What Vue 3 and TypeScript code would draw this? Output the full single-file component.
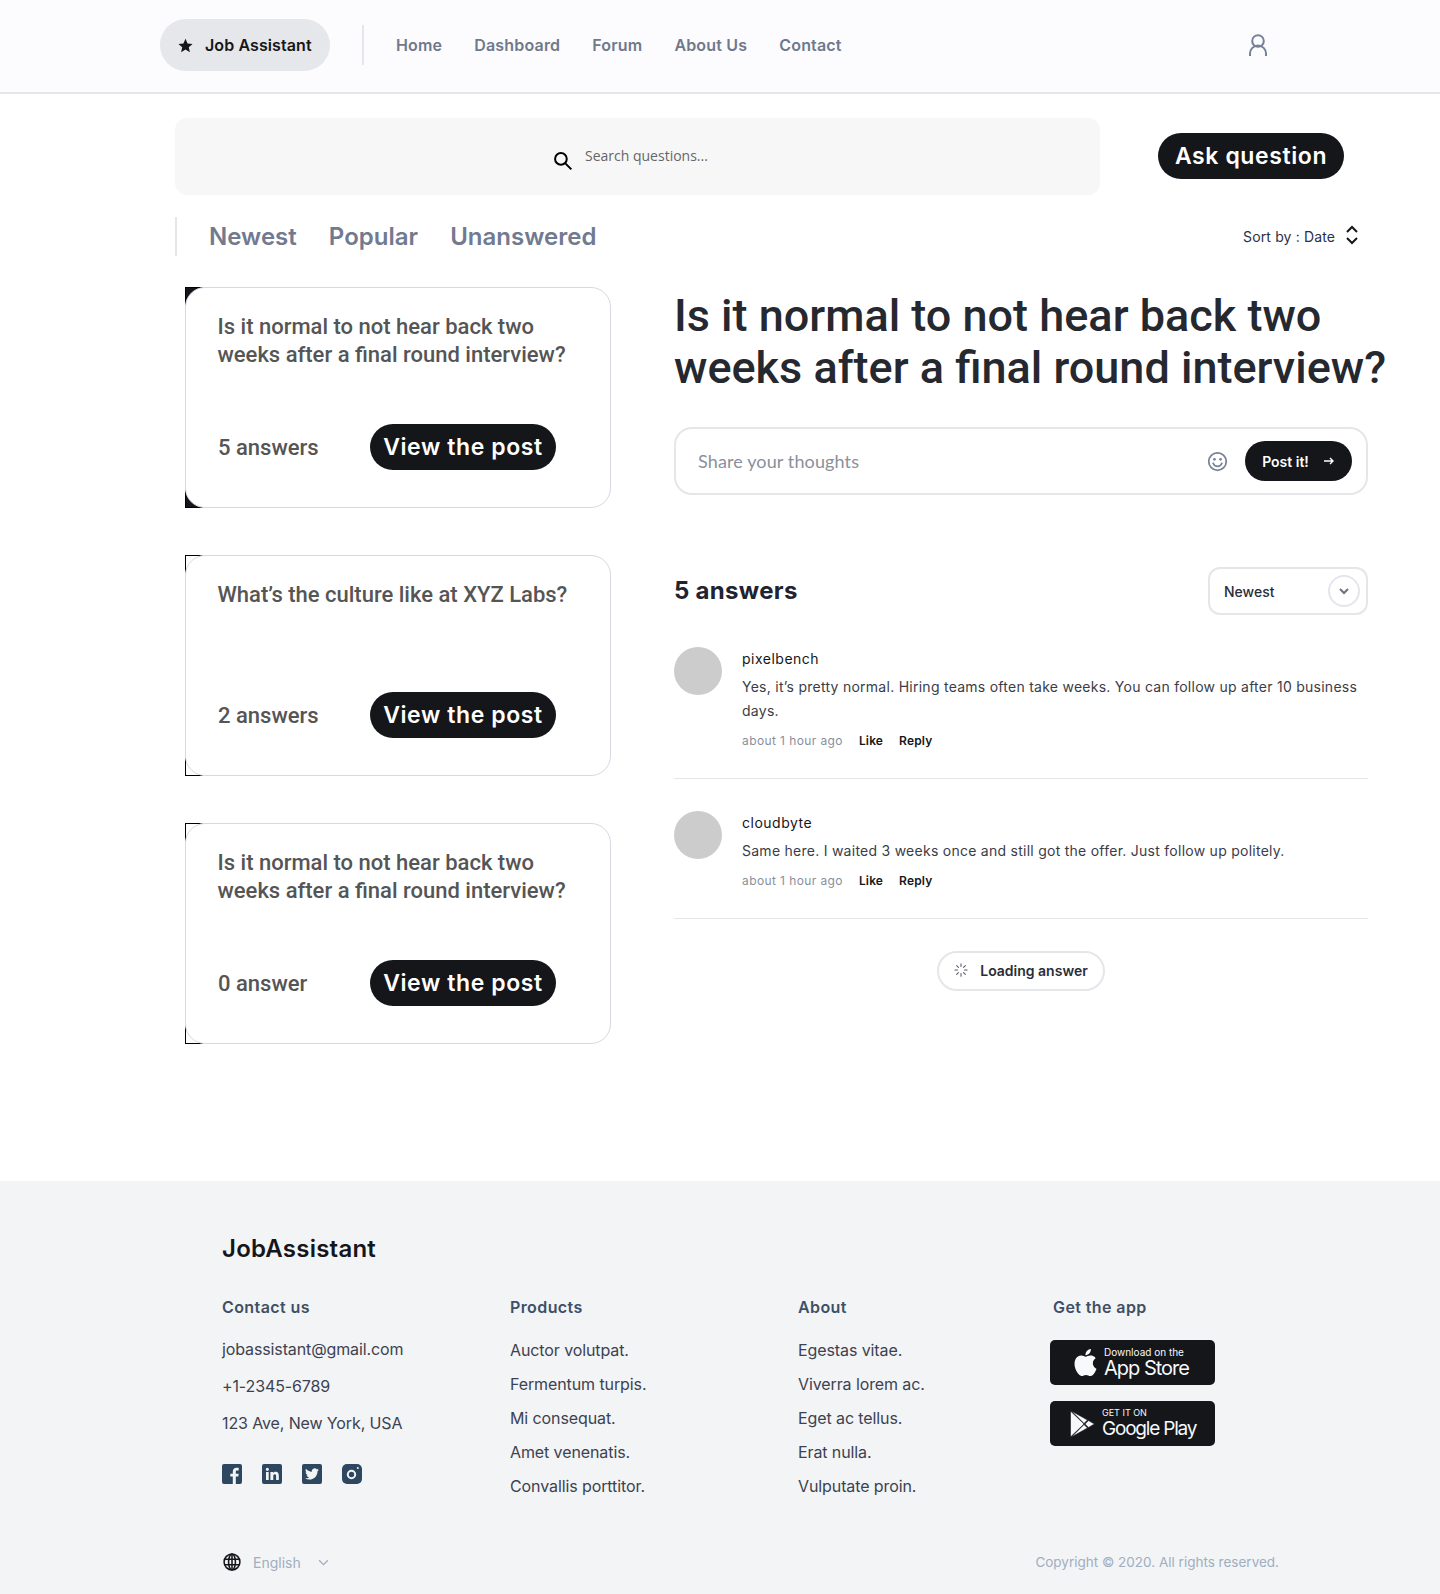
<template>
  <div class="page">
    <header class="top_bar">
      <div class="logo_pill">
        <svg class="star" viewBox="0 0 24 24"><path d="M12 2.500l2.900 6.600 7.100.7-5.400 4.700 1.600 7-6.200-3.700-6.200 3.700 1.600-7L2 9.800l7.100-.7z" /></svg>
        <span>Job Assistant</span>
      </div>
      <nav class="nav">
        <a v-for="item in navItems" :key="item">{{ item }}</a>
      </nav>
      <svg class="user_icon" viewBox="0 0 18 22" fill="none" stroke="#768096" stroke-width="2">
        <circle cx="9" cy="7" r="5.800" />
        <path d="M1 22v-2.500a8 8 0 0 1 16 0V22" />
      </svg>
    </header>

    <main class="main">
      <div class="search_row">
        <div class="search_box">
          <svg class="search_icon" viewBox="0 0 24 24" fill="none" stroke="#000" stroke-width="2.400">
            <circle cx="9.500" cy="9.500" r="7" />
            <path d="M14.500 14.500l7.500 7.500" />
          </svg>
          <span class="search_text">Search questions...</span>
        </div>
        <button class="btn_big ask">Ask question</button>
      </div>

      <div class="tabs_row">
        <div class="tabs">
          <span v-for="tab in tabs" :key="tab">{{ tab }}</span>
        </div>
        <div class="sort">
          <span>Sort by : Date</span>
          <svg viewBox="0 0 14 20" fill="none" stroke="#15161a" stroke-width="2">
            <path d="M2 7l5-5 5 5M2 13l5 5 5-5" />
          </svg>
        </div>
      </div>

      <div class="columns">
        <div class="question_list">
          <div
            v-for="(q, i) in questions"
            :key="i"
            class="question_card"
            :class="{ active: i === 0 }"
          >
            <p class="question_title">{{ q.title }}</p>
            <div class="question_foot">
              <span class="question_count">{{ q.count }}</span>
              <button class="btn_big">View the post</button>
            </div>
          </div>
        </div>

        <section class="detail">
          <h1>Is it normal to not hear back two weeks after a final round interview?</h1>
          <div class="thought_box">
            <span class="thought_text">Share your thoughts</span>
            <svg class="smile" viewBox="0 0 24 24" fill="none" stroke="#768096" stroke-width="2">
              <circle cx="12" cy="12" r="10" />
              <circle cx="8.500" cy="9.500" r="1.500" fill="#768096" stroke="none" />
              <circle cx="15.500" cy="9.500" r="1.500" fill="#768096" stroke="none" />
              <path d="M7 14c1 2.400 2.900 3.500 5 3.500s4-1.100 5-3.500" stroke-linecap="round" />
            </svg>
            <button class="post_btn">
              <span>Post it!</span>
              <svg viewBox="0 0 12 10" fill="none" stroke="#fff" stroke-width="1.400"><path d="M1 5h9M7 2l3 3-3 3" /></svg>
            </button>
          </div>

          <div class="answers_head">
            <h2>5 answers</h2>
            <div class="select_box">
              <span>Newest</span>
              <span class="select_circle">
                <svg viewBox="0 0 12 8" fill="none" stroke="#6b7280" stroke-width="2"><path d="M2 2l4 4 4-4" /></svg>
              </span>
            </div>
          </div>

          <div v-for="a in answers" :key="a.name" class="answer">
            <div class="avatar"></div>
            <div class="answer_body">
              <div class="answer_name">{{ a.name }}</div>
              <p class="answer_text">{{ a.text }}</p>
              <div class="answer_meta">
                <span class="answer_time">about 1 hour ago</span>
                <b>Like</b>
                <b>Reply</b>
              </div>
            </div>
          </div>

          <div class="loading_wrap">
            <div class="loading_pill">
              <svg viewBox="0 0 16 16" stroke="#555b68" stroke-width="1.200" stroke-linecap="round">
                <path d="M8 1v3M8 12v3M1 8h3M12 8h3M3 3l2.100 2.100M10.900 10.900L13 13M3 13l2.100-2.100M10.900 5.100L13 3" />
              </svg>
              <span>Loading answer</span>
            </div>
          </div>
        </section>
      </div>
    </main>

    <footer class="footer">
      <div class="brand">JobAssistant</div>
      <div class="footer_cols">
        <div class="col col_contact">
          <h4>Contact us</h4>
          <div class="contact_line" v-for="c in contacts" :key="c">{{ c }}</div>
          <div class="socials">
            <svg viewBox="0 0 20 20"><rect width="20" height="20" rx="2" fill="#2e4760" /><path fill="#f3f4f6" d="M13.800 20v-7.400h2.500l.4-2.900h-2.900V7.900c0-.8.200-1.400 1.400-1.400h1.500V3.900c-.3 0-1.200-.1-2.200-.1-2.200 0-3.700 1.300-3.700 3.800v2.100H8.300v2.900h2.500V20z" /></svg>
            <svg viewBox="0 0 20 20"><rect width="20" height="20" rx="2" fill="#2e4760" /><path fill="#f3f4f6" d="M4 8h2.700v8H4zM5.350 3.800a1.550 1.550 0 1 1 0 3.100 1.550 1.550 0 0 1 0-3.100zM8.400 8h2.600v1.100c.4-.7 1.300-1.300 2.600-1.300 2.700 0 3.200 1.700 3.200 4V16h-2.700v-3.700c0-.9 0-2.100-1.300-2.100s-1.500 1-1.500 2V16H8.400z" /></svg>
            <svg viewBox="0 0 20 20"><rect width="20" height="20" rx="2" fill="#2e4760" /><path fill="#f3f4f6" transform="translate(3 3) scale(.58)" d="M23.953 4.570a10 10 0 01-2.825.775 4.958 4.958 0 002.163-2.723c-.951.555-2.005.959-3.127 1.184a4.920 4.920 0 00-8.384 4.482C7.690 8.095 4.067 6.130 1.640 3.162a4.822 4.822 0 00-.666 2.475c0 1.710.870 3.213 2.188 4.096a4.904 4.904 0 01-2.228-.616v.060a4.923 4.923 0 003.946 4.827 4.996 4.996 0 01-2.212.085 4.936 4.936 0 004.604 3.417 9.867 9.867 0 01-6.102 2.105c-.390 0-.779-.023-1.170-.067a13.995 13.995 0 007.557 2.209c9.053 0 13.998-7.496 13.998-13.985 0-.210 0-.420-.015-.630A9.935 9.935 0 0024 4.590z" /></svg>
            <svg viewBox="0 0 20 20"><rect width="20" height="20" rx="5" fill="#2e4760" /><circle cx="9.500" cy="10.500" r="3.700" fill="none" stroke="#f3f4f6" stroke-width="2" /><circle cx="15.800" cy="4" r="1" fill="#f3f4f6" /></svg>
          </div>
        </div>
        <div class="col col_links" v-for="col in linkCols" :key="col.title">
          <h4>{{ col.title }}</h4>
          <div class="link_line" v-for="l in col.links" :key="l">{{ l }}</div>
        </div>
        <div class="col col_app">
          <h4>Get the app</h4>
          <div class="store_badge">
            <svg class="apple" viewBox="0 0 24 24" fill="#f7f9fb"><path d="M12.152 6.896c-.948 0-2.415-1.078-3.960-1.040-2.040.027-3.910 1.183-4.961 3.014-2.117 3.675-.546 9.103 1.519 12.090 1.013 1.454 2.208 3.090 3.792 3.039 1.520-.065 2.090-.987 3.935-.987 1.831 0 2.350.987 3.960.948 1.637-.026 2.676-1.480 3.676-2.948 1.156-1.688 1.636-3.325 1.662-3.415-.039-.013-3.182-1.221-3.220-4.857-.026-3.040 2.480-4.494 2.597-4.559-1.429-2.090-3.623-2.324-4.390-2.376-2-.156-3.675 1.090-4.610 1.090zM15.530 3.830c.843-1.012 1.400-2.427 1.245-3.830-1.207.052-2.662.805-3.532 1.818-.780.896-1.454 2.338-1.273 3.714 1.338.104 2.715-.688 3.559-1.701" /></svg>
            <div class="store_text">
              <small>Download on the</small>
              <strong>App Store</strong>
            </div>
          </div>
          <div class="store_badge play">
            <svg class="play_icon" viewBox="0 0 24 26" fill="#f7f9fb" stroke="#15161a" stroke-width=".6">
              <path d="M0 0l13.500 13L0 26z" />
              <path d="M1 0l16 9-3.500 3.500z" />
              <path d="M1 26l16-9-3.500-3.500z" />
              <path d="M18 9.600L24 13l-6 3.400-3.500-3.400z" />
            </svg>
            <div class="store_text">
              <small>GET IT ON</small>
              <strong>Google Play</strong>
            </div>
          </div>
        </div>
      </div>
      <div class="footer_bottom">
        <div class="lang">
          <svg class="globe" viewBox="0 0 20 20" fill="none" stroke="#15161a" stroke-width="1.700">
            <circle cx="10" cy="10" r="8.800" />
            <ellipse cx="10" cy="10" rx="3.800" ry="8.800" />
            <path d="M2 7h16M2 13h16M10 1v18" />
          </svg>
          <span>English</span>
          <svg class="lang_chev" viewBox="0 0 12 8" fill="none" stroke="#a0aec0" stroke-width="1.500"><path d="M1 1.500l5 5 5-5" /></svg>
        </div>
        <div class="copyright">Copyright © 2020. All rights reserved.</div>
      </div>
    </footer>
  </div>
</template>

<script setup lang="ts">
interface Question {
  title: string;
  count: string;
}
interface Answer {
  name: string;
  text: string;
}

const navItems = ['Home', 'Dashboard', 'Forum', 'About Us', 'Contact'];
const tabs = ['Newest', 'Popular', 'Unanswered'];

const questions: Question[] = [
  { title: 'Is it normal to not hear back two weeks after a final round interview?', count: '5 answers' },
  { title: 'What’s the culture like at XYZ Labs?', count: '2 answers' },
  { title: 'Is it normal to not hear back two weeks after a final round interview?', count: '0 answer' },
];

const answers: Answer[] = [
  { name: 'pixelbench', text: 'Yes, it’s pretty normal. Hiring teams often take weeks. You can follow up after 10 business days.' },
  { name: 'cloudbyte', text: 'Same here. I waited 3 weeks once and still got the offer. Just follow up politely.' },
];

const contacts = ['jobassistant@gmail.com', '+1-2345-6789', '123 Ave, New York, USA'];

const linkCols = [
  { title: 'Products', links: ['Auctor volutpat.', 'Fermentum turpis.', 'Mi consequat.', 'Amet venenatis.', 'Convallis porttitor.'] },
  { title: 'About', links: ['Egestas vitae.', 'Viverra lorem ac.', 'Eget ac tellus.', 'Erat nulla.', 'Vulputate proin.'] },
];
</script>

<style>
body {
  background: #fff;
}
</style>

<style scoped>
.page {
  width: 1440px;
  height: 1594px;
  display: flex;
  flex-direction: column;
  font-family: Inter, "Liberation Sans", sans-serif;
  color: #15161a;
}

.top_bar {
  height: 94px;
  box-sizing: border-box;
  display: flex;
  align-items: center;
  padding: 0 173px 2px 160px;
  background: #fcfcfe;
  border-bottom: 2px solid #e5e6ea;
}

.logo_pill {
  width: 170px;
  height: 52px;
  box-sizing: border-box;
  display: flex;
  align-items: center;
  gap: 11px;
  padding-left: 17px;
  background: #e6e7ea;
  border-radius: 26px;
  font-size: 16px;
  font-weight: 600;
  letter-spacing: 0.1px;
}

.star {
  width: 17px;
  height: 17px;
  fill: #15161a;
}

.nav {
  height: 40px;
  display: flex;
  align-items: center;
  gap: 32px;
  margin-left: 32px;
  padding-left: 32px;
  border-left: 2px solid #e5e6ea;
  font-size: 16px;
  font-weight: 600;
  letter-spacing: 0.18px;
  color: #6f788c;
}

.user_icon {
  width: 18px;
  height: 22px;
  margin-left: auto;
}

.main {
  flex: 1;
  padding: 24px 0 0 175px;
}

.search_row {
  display: flex;
  align-items: center;
}

.search_box {
  width: 925px;
  height: 77px;
  display: flex;
  align-items: center;
  padding-left: 378px;
  box-sizing: border-box;
  background: #f7f7f7;
  border-radius: 12px;
}

.search_icon {
  width: 20px;
  height: 20px;
  margin: 9px 12px 0 0;
}

.search_text {
  margin-top: -2px;
  font-family: "Open Sans", sans-serif;
  font-size: 14px;
  color: #666;
}

.btn_big {
  width: 186px;
  height: 46px;
  padding: 0;
  background: #15161a;
  color: #fff;
  border: 0;
  border-radius: 23px;
  font-family: Inter, sans-serif;
  font-size: 23px;
  font-weight: 600;
  letter-spacing: 0.6px;
  white-space: nowrap;
}

.ask {
  margin: -2px 0 0 58px;
}

.tabs_row {
  display: flex;
  align-items: center;
  height: 39px;
  margin-top: 22px;
}

.tabs {
  width: 1068px;
  height: 39px;
  box-sizing: border-box;
  display: flex;
  align-items: center;
  gap: 32px;
  padding-left: 32px;
  border-left: 2px solid #e5e6ea;
  font-size: 24px;
  font-weight: 600;
  letter-spacing: 0.02px;
  color: #717a8f;
}

.sort {
  display: flex;
  align-items: center;
  gap: 10px;
  font-size: 14px;
  letter-spacing: 0.15px;
  color: #2a3147;
}

.sort svg {
  width: 14px;
  height: 20px;
  margin-top: -3px;
}

.columns {
  display: flex;
  align-items: flex-start;
  margin-top: 31px;
  padding-left: 10px;
}

.question_list {
  display: flex;
  flex-direction: column;
  gap: 47px;
  width: 426px;
}

.question_card {
  position: relative;
  height: 221px;
  box-sizing: border-box;
  display: flex;
  flex-direction: column;
  justify-content: space-between;
  padding: 25px 32px 37px;
  background: #fff;
  border: 1px solid #d8d9e0;
  border-radius: 20px;
}

/* corner marks that show behind the rounded card */
.question_card::before,
.question_card::after {
  content: "";
  position: absolute;
  left: -1px;
  width: 18px;
  height: 18px;
  z-index: -1;
  box-sizing: border-box;
  border-left: 1px solid #000;
}

.question_card::before {
  top: -1px;
  border-top: 1px solid #000;
}

.question_card::after {
  bottom: -1px;
  border-bottom: 1px solid #000;
}

.question_card.active::before,
.question_card.active::after {
  background: #15161a;
}

.question_title {
  margin: 0 0 0 -0.5px;
  font-family: Roboto, sans-serif;
  font-size: 22px;
  font-weight: 500;
  line-height: 28px;
  color: #555;
}

.question_foot {
  display: flex;
  align-items: center;
}

.question_count {
  width: 152px;
  font-family: Roboto, sans-serif;
  font-size: 22px;
  font-weight: 500;
  color: #555;
}

.detail {
  width: 694px;
  margin-left: 63px;
}

.detail h1 {
  width: 740px;
  margin: 3px 0 0;
  font-family: Roboto, sans-serif;
  font-size: 45px;
  font-weight: 500;
  line-height: 52px;
  color: #26282f;
}

.thought_box {
  height: 68px;
  box-sizing: border-box;
  display: flex;
  align-items: center;
  margin-top: 33px;
  padding: 0 14px 0 22px;
  border: 2px solid #e5e6ea;
  border-radius: 18px;
}

.thought_text {
  flex: 1;
  font-family: Lato, sans-serif;
  font-size: 18px;
  letter-spacing: 0.12px;
  color: #8a8f9c;
}

.smile {
  width: 21px;
  height: 21px;
  margin-right: 17px;
}

.post_btn {
  width: 107px;
  height: 40px;
  display: flex;
  align-items: center;
  justify-content: center;
  gap: 14px;
  background: #15161a;
  color: #fff;
  border: 0;
  border-radius: 20px;
  font-family: Inter, sans-serif;
  font-size: 14px;
  font-weight: 600;
}

.post_btn svg {
  width: 12px;
  height: 10px;
}

.answers_head {
  display: flex;
  align-items: center;
  justify-content: space-between;
  margin-top: 72px;
}

.answers_head h2 {
  margin: 0 0 2px;
  font-size: 24px;
  font-weight: 700;
  letter-spacing: 0.3px;
  color: #1f2430;
}

.select_box {
  width: 160px;
  height: 48px;
  box-sizing: border-box;
  display: flex;
  align-items: center;
  justify-content: space-between;
  padding: 0 6px 0 14px;
  border: 2px solid #e5e6ea;
  border-radius: 12px;
  font-size: 14px;
  font-weight: 500;
  color: #2a2d38;
}

.select_circle {
  width: 32px;
  height: 32px;
  box-sizing: border-box;
  display: flex;
  align-items: center;
  justify-content: center;
  border: 2px solid #e5e6ea;
  border-radius: 50%;
}

.select_circle svg {
  width: 12px;
  height: 8px;
}

.answer {
  display: flex;
  gap: 20px;
  margin-top: 32px;
  padding-bottom: 25px;
  border-bottom: 1px solid #e5e6ea;
}

.avatar {
  width: 48px;
  height: 48px;
  flex: none;
  background: #ccc;
  border-radius: 50%;
}

.answer_body {
  flex: 1;
}

.answer_name {
  font-size: 14px;
  line-height: 24px;
  letter-spacing: 0.5px;
  color: #15161a;
}

.answer_text {
  margin: 4px 0 0;
  font-size: 14px;
  line-height: 24px;
  letter-spacing: 0.26px;
  color: #3a3d48;
}

.answer_meta {
  display: flex;
  gap: 16px;
  margin-top: 6px;
  font-size: 12px;
  line-height: 24px;
}

.answer_time {
  letter-spacing: 0.4px;
  color: #8a8f9c;
}

.answer_meta b {
  font-weight: 600;
  letter-spacing: 0.15px;
}

.loading_wrap {
  display: flex;
  justify-content: center;
  margin-top: 32px;
}

.loading_pill {
  height: 40px;
  box-sizing: border-box;
  display: flex;
  align-items: center;
  gap: 12px;
  padding: 0 15px 2px;
  border: 2px solid #e5e6ea;
  border-radius: 20px;
  font-size: 14px;
  font-weight: 600;
  color: #2a2d38;
}

.loading_pill svg {
  width: 14px;
  height: 14px;
}

.footer {
  height: 413px;
  box-sizing: border-box;
  padding: 53px 161px 0 222px;
  background: #f3f4f6;
}

.brand {
  font-size: 24px;
  font-weight: 600;
  line-height: 30px;
  letter-spacing: 0.22px;
  color: #15161a;
}

.footer_cols {
  display: flex;
  margin-top: 31px;
}

.col h4 {
  margin: 0;
  font-size: 16px;
  font-weight: 600;
  line-height: 24px;
  letter-spacing: 0.4px;
  color: #3c5068;
}

.col_contact {
  width: 288px;
}

.col_links {
  width: 288px;
}

.col_links:nth-child(3) {
  width: 255px;
}

.contact_line {
  font-size: 16px;
  line-height: 37px;
  letter-spacing: -0.12px;
  color: #3c4250;
}

.col_contact h4 {
  margin-bottom: 12px;
}

.link_line {
  font-size: 16px;
  line-height: 34px;
  letter-spacing: -0.1px;
  color: #3c4250;
}

.col_links h4 {
  margin-bottom: 14px;
}

.socials {
  display: flex;
  gap: 20px;
  margin-top: 22px;
}

.socials svg {
  width: 20px;
  height: 20px;
}

.store_badge {
  width: 165px;
  height: 45px;
  margin: 21px 0 0 -3px;
  box-sizing: border-box;
  display: flex;
  align-items: center;
  gap: 5px;
  padding-left: 22px;
  background: #15161a;
  border-radius: 5px;
  color: #f7f9fb;
}

.store_badge.play {
  margin-top: 16px;
  padding-left: 20px;
  gap: 7px;
}

.apple {
  width: 27px;
  height: 27px;
}

.play_icon {
  width: 25px;
  height: 26px;
}

.store_text {
  display: flex;
  flex-direction: column;
}

.store_text small {
  font-size: 10px;
  line-height: 10px;
}

.store_text strong {
  font-size: 20px;
  font-weight: 400;
  line-height: 22px;
  letter-spacing: -1px;
}

.play .store_text small {
  font-size: 9px;
}

.play .store_text strong {
  font-size: 19px;
  letter-spacing: -1.2px;
}

.footer_bottom {
  display: flex;
  align-items: center;
  justify-content: space-between;
  margin-top: 50px;
}

.lang {
  display: flex;
  align-items: center;
  padding-left: 1px;
  font-size: 14px;
  color: #a0aec0;
}

.globe {
  width: 18px;
  height: 18px;
  margin-right: 12px;
}

.lang_chev {
  width: 11px;
  height: 7px;
  margin-left: 17px;
}

.copyright {
  font-size: 13.5px;
  color: #a0aec0;
}
</style>
